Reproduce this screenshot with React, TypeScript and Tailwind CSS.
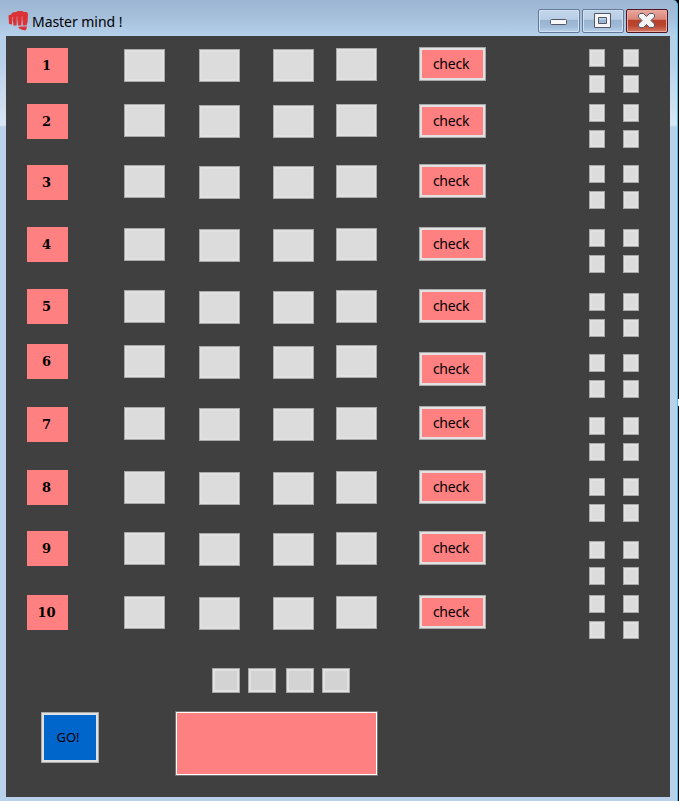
import React from "react";

const rows = {
  label: [48, 104, 165, 227, 289, 344, 407, 470, 531, 595],
  outer: [49, 104, 165, 228, 290, 345, 407, 471, 532, 596],
  inner: [49, 105, 166, 229, 291, 346, 408, 472, 533, 597],
  last: [48, 104, 165, 228, 290, 345, 407, 471, 532, 596],
  check: [47, 104, 164, 227, 289, 352, 406, 470, 531, 595],
  pegs: [49, 75, 104, 130, 165, 191, 229, 255, 293, 319, 354, 380, 417, 443, 478, 504, 541, 567, 595, 621],
};

type ColumnProps = {
  tops: number[];
  height: number;
  className: string;
  item: (i: number) => React.ReactNode;
};

/* A vertical stack whose gaps follow the uneven row offsets of the board. */
function Column({ tops, height, className, item }: ColumnProps) {
  return (
    <div className={`flex shrink-0 flex-col ${className}`}>
      {tops.map((top, i) => (
        <div key={top} className="flex" style={{ height, marginTop: i === 0 ? top - 36 : top - tops[i - 1] - height }}>
          {item(i)}
        </div>
      ))}
    </div>
  );
}

function Cell({ tone = "bg-[#dcdcdc]" }: { tone?: string }) {
  return (
    <div className="flex flex-1 border border-[#a9a9a9]">
      <div className={`flex-1 border-2 border-[#e1e1e1] ${tone}`} />
    </div>
  );
}

function CheckButton() {
  return (
    <button className="flex flex-1 border border-[#a9a9a9] text-black">
      <span className="flex h-full flex-1 items-center justify-center border-2 border-[#e1e1e1] bg-[#ff8080] pr-[3px] text-[14px] leading-none tracking-[-0.25px]">
        check
      </span>
    </button>
  );
}

function FistIcon() {
  return (
    <svg width="21" height="22" viewBox="0 0 21 22" className="shrink-0">
      <path
        fill="#db3237"
        d="M0.500 5.500 3 4.500 4.500 2.500 8 2 10 1H14L16 2H19L20 4 19.600 12 18.500 15.500H14.800L14.500 10 13.800 10 13.300 15.500H10L9.400 10H8.800L8.600 15.500H5.500L4.800 10H4.300L4 14.500 1 14Z"
      />
      <path fill="#db3237" d="M10.500 17 13 16.500 19 16.500 18.500 18.500 17.500 20.500 15 20 11 18.500Z" />
      <path d="M4.500 7V10M9 6.500V10M14 6.500V10" stroke="#cf8f9d" strokeWidth="0.800" />
    </svg>
  );
}

const glass = "bg-[linear-gradient(#c1d5ea_0%,#b9cfe5_43%,#98b3d0_44%,#a0bbd7_75%,#b8d2eb_100%)]";
const danger = "bg-[linear-gradient(#e9a79d_0%,#d98678_43%,#b8402a_44%,#b9452f_70%,#d57964_100%)]";

function Controls() {
  return (
    <div className="mt-[9px] ml-auto flex gap-[2px]">
      <button className={`flex h-6 w-[42px] items-center justify-center rounded-[2px] border border-[#64799b] shadow-[inset_0_0_0_1px_#d2e1f1] ${glass}`}>
        <svg width="18" height="16" viewBox="0 0 18 16">
          <rect x="0.5" y="6.5" width="16" height="5" rx="1" fill="#f8f8f8" stroke="#535666" />
        </svg>
      </button>
      <button className={`flex h-6 w-[42px] items-center justify-center rounded-[2px] border border-[#64799b] shadow-[inset_0_0_0_1px_#d2e1f1] ${glass}`}>
        <svg width="18" height="16" viewBox="0 0 18 16">
          <path d="M0.500 0.500H16.500V14.500H0.500ZM4.500 4.500V10.500H12.500V4.500Z" fillRule="evenodd" fill="#f5f5f5" stroke="#535666" />
        </svg>
      </button>
      <button className={`flex h-6 w-[42px] items-center justify-center rounded-[2px] border border-[#4e1420] shadow-[inset_0_0_0_1px_#e8aca2] ${danger}`}>
        <svg width="18" height="16" viewBox="0 0 18 16">
          <path
            d="M2 0.500H5.500L8.500 3.500 11.500 0.500H15L16.500 2V4L13 7.500 16.500 11V13L15 14.500H11.500L8.500 11.500 5.500 14.500H2L0.500 13V11L4 7.500 0.500 4V2Z"
            fill="#f4f4f4"
            stroke="#535666"
            strokeLinejoin="round"
          />
        </svg>
      </button>
    </div>
  );
}

export default function App() {
  return (
    <div className="flex h-[801px] w-[679px] bg-black font-['Noto_Sans','Open_Sans',sans-serif]">
      <div className="flex h-full w-[678px] shrink-0 flex-col rounded-tr-[5px] border-r border-[#3fc3e4] bg-[linear-gradient(#9bb5d2_0px,#a6c0dc_18px,#b6d1ea_36px,#b9d0ea_60px,#dae6f3_125px,#b9d1ea_127px)] pr-[7px] pl-[6px]">
        <header className="flex h-9 shrink-0 pr-[2px] pl-[2px]">
          <div className="mt-[10px] flex">
            <FistIcon />
            <h1 className="mt-px ml-[3px] text-[14px] leading-[22px] tracking-[-0.05px] text-black">Master mind !</h1>
          </div>
          <Controls />
        </header>
        <main className="flex h-[761px] w-[664px] shrink-0 flex-col bg-[#404040]">
          <section className="flex h-[632px] shrink-0">
            <Column
              tops={rows.label}
              height={35}
              className="ml-[21px] w-[41px]"
              item={(i) => (
                <div className="flex flex-1 items-center justify-center bg-[#ff8080] pt-px pr-[2px] font-['DejaVu_Serif',serif] text-[13px] font-bold text-black">
                  {i + 1}
                </div>
              )}
            />
            <Column tops={rows.outer} height={33} className="ml-[56px] w-[41px]" item={() => <Cell />} />
            <Column tops={rows.inner} height={33} className="ml-[34px] w-[41px]" item={() => <Cell />} />
            <Column tops={rows.inner} height={33} className="ml-[33px] w-[41px]" item={() => <Cell />} />
            <Column tops={rows.last} height={33} className="ml-[22px] w-[41px]" item={() => <Cell />} />
            <Column tops={rows.check} height={34} className="ml-[42px] w-[67px]" item={() => <CheckButton />} />
            <Column tops={rows.pegs} height={18} className="ml-[103px] w-4" item={() => <Cell />} />
            <Column tops={rows.pegs} height={18} className="ml-[18px] w-4" item={() => <Cell />} />
          </section>
          <section className="ml-[206px] flex h-[25px] shrink-0">
            <div className="flex w-7"><Cell tone="bg-[#d3d3d3]" /></div>
            <div className="ml-2 flex w-7"><Cell tone="bg-[#d3d3d3]" /></div>
            <div className="ml-[10px] flex w-7"><Cell tone="bg-[#d3d3d3]" /></div>
            <div className="ml-2 flex w-7"><Cell tone="bg-[#d3d3d3]" /></div>
          </section>
          <section className="mt-[18px] flex items-start pl-[35px]">
            <button className="mt-px flex h-[51px] w-[58px] border border-[#a9a9a9]">
              <span className="flex h-full flex-1 items-center justify-center border-2 border-[#e1e1e1] bg-[#0066cc] pt-px pr-1 text-[13px] text-black">GO!</span>
            </button>
            <div className="ml-[76px] flex h-[65px] w-[203px] border border-[#757575]">
              <div className="flex-1 border border-white bg-[#ff8080]" />
            </div>
          </section>
        </main>
      </div>
      <div className="mt-[399px] h-[7px] w-px bg-white" />
    </div>
  );
}
